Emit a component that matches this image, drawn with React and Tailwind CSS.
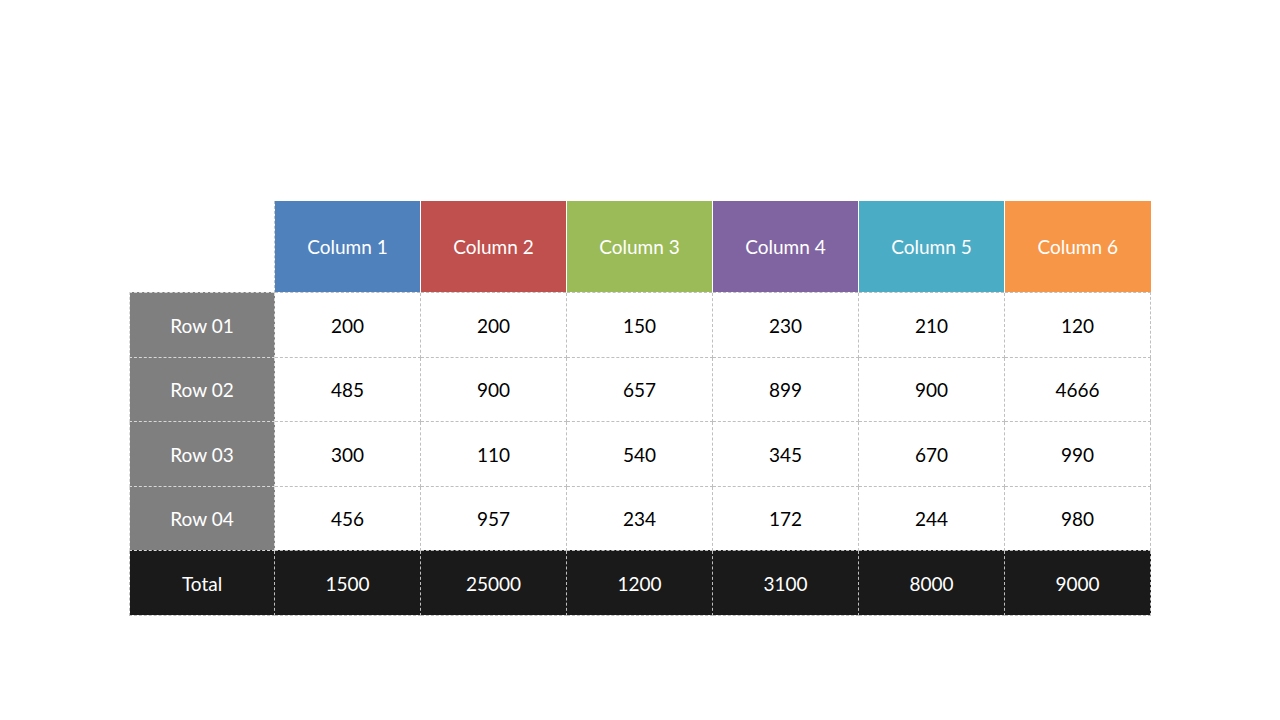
import React from 'react';

const headers = [
  { label: 'Column 1', bg: 'bg-[#4f81bd]' },
  { label: 'Column 2', bg: 'bg-[#c0504d]' },
  { label: 'Column 3', bg: 'bg-[#9bbb59]' },
  { label: 'Column 4', bg: 'bg-[#8064a2]' },
  { label: 'Column 5', bg: 'bg-[#4bacc6]' },
  { label: 'Column 6', bg: 'bg-[#f79646]' },
];

const rows = [
  { label: 'Row 01', values: [200, 200, 150, 230, 210, 120] },
  { label: 'Row 02', values: [485, 900, 657, 899, 900, 4666] },
  { label: 'Row 03', values: [300, 110, 540, 345, 670, 990] },
  { label: 'Row 04', values: [456, 957, 234, 172, 244, 980] },
];

const totals = [1500, 25000, 1200, 3100, 8000, 9000];

const App = () => {
  return (
    <main className="w-[1280px] h-[720px] bg-white pt-[201px] font-['Lato','Open_Sans',sans-serif]">
      <table className="mx-auto w-[1020px] table-fixed border-collapse text-[19px]">
        <colgroup>
          <col className="w-[145px]" />
          {headers.map((h) => (
            <col key={h.label} className="w-[146px]" />
          ))}
        </colgroup>
        <thead>
          <tr className="h-[91px]">
            <th className="p-0"></th>
            {headers.map((h, i) => (
              <th
                key={h.label}
                className={`${h.bg} p-0 pt-[2px] font-normal text-white text-center ${
                  i === 0 ? 'border-l border-dashed border-[#bfbfbf]' : 'border-l border-white'
                }`}
              >
                {h.label}
              </th>
            ))}
          </tr>
        </thead>
        <tbody>
          {rows.map((r, ri) => (
            <tr key={r.label} className={ri % 2 === 0 ? 'h-[65px]' : 'h-[64px]'}>
              <td className="bg-[#7f7f7f] text-white text-center p-0 pt-[3px] border border-dashed border-[#d9d9d9]">
                {r.label}
              </td>
              {r.values.map((v, i) => (
                <td
                  key={i}
                  className="text-center text-black p-0 pt-[3px] border border-dashed border-[#bfbfbf]"
                >
                  {v}
                </td>
              ))}
            </tr>
          ))}
          <tr className="h-[65px] bg-[#1a1a1a]">
            <td className="text-white text-center p-0 pt-[3px] border border-dashed border-[#bfbfbf]">Total</td>
            {totals.map((v, i) => (
              <td
                key={i}
                className="text-white text-center p-0 pt-[3px] border border-dashed border-[#bfbfbf]"
              >
                {v}
              </td>
            ))}
          </tr>
        </tbody>
      </table>
    </main>
  );
};

export default App;
